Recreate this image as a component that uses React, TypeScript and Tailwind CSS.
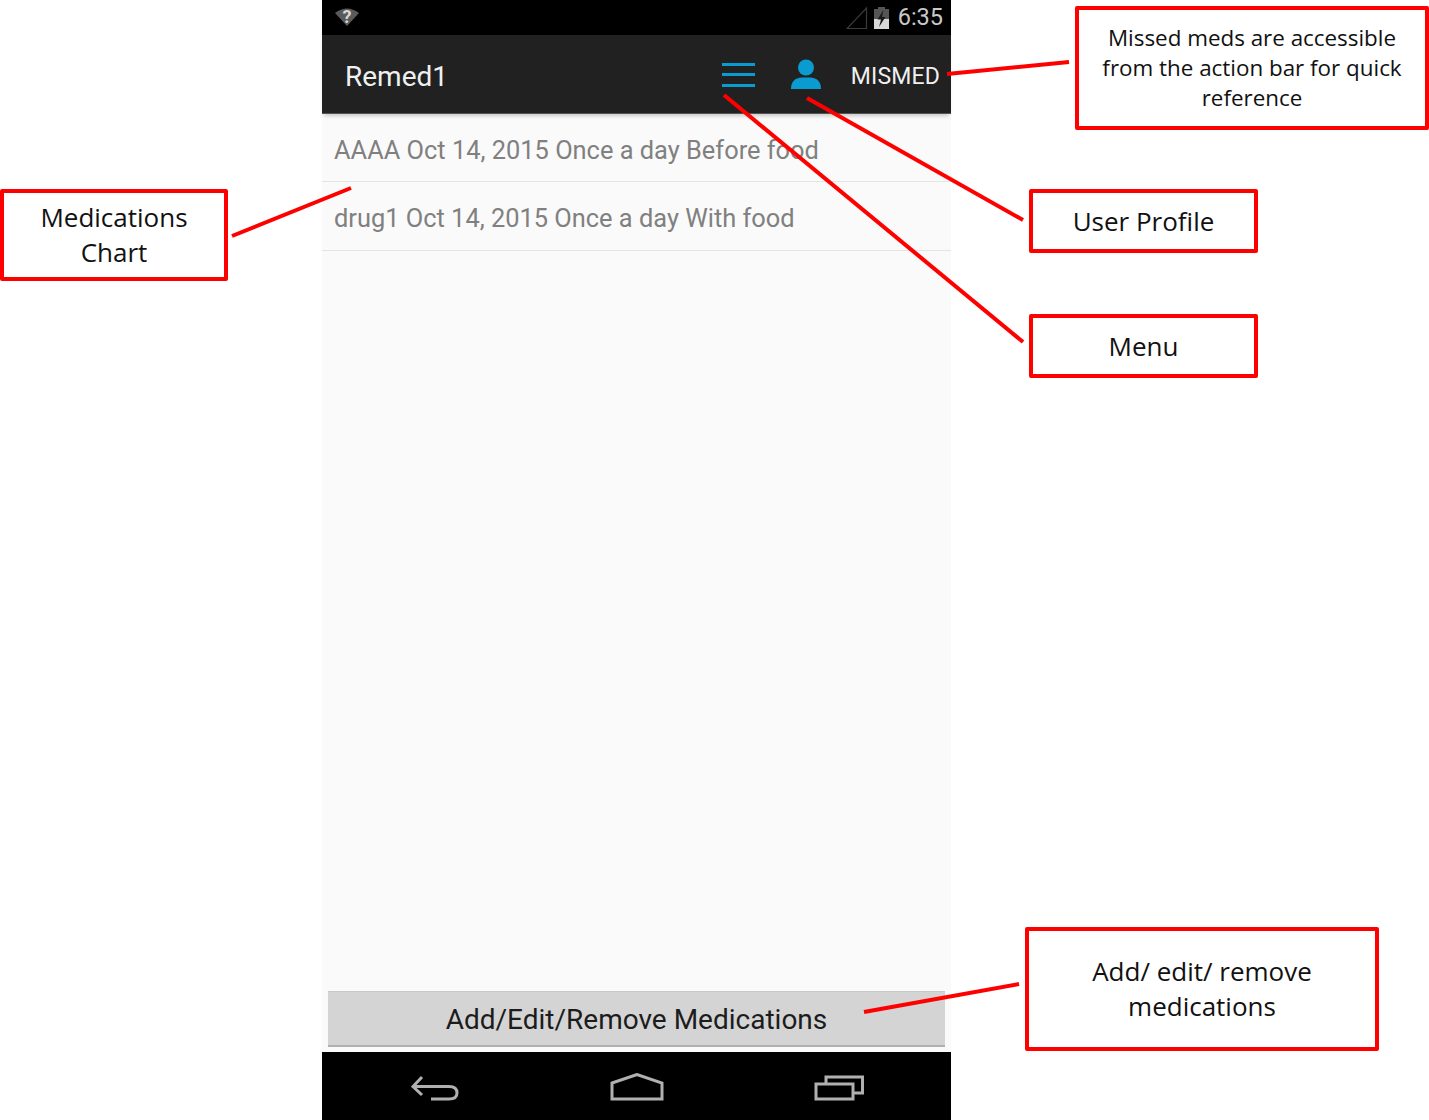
const callouts = [
  { text: ["Missed meds are accessible", "from the action bar for quick", "reference"], box: "left-[1075px] top-[6px] w-[354px] h-[124px] text-[22.4px] leading-[30px]" },
  { text: ["User Profile"], box: "left-[1029px] top-[189px] w-[229px] h-[64px] text-[26px] leading-[35px]" },
  { text: ["Menu"], box: "left-[1029px] top-[314px] w-[229px] h-[64px] text-[26px] leading-[35px]" },
  { text: ["Medications", "Chart"], box: "left-0 top-[189px] w-[228px] h-[92px] text-[26px] leading-[35px]" },
  { text: ["Add/ edit/ remove", "medications"], box: "left-[1025px] top-[927px] w-[354px] h-[124px] text-[26px] leading-[35px]" },
];

const leaders = [
  [947, 74, 1069, 62],
  [807, 98, 1023, 220],
  [724, 95, 1023, 342],
  [232, 236, 351, 188],
  [864, 1012, 1019, 984],
];

const rows = [
  "AAAA Oct 14, 2015 Once a day Before food",
  "drug1 Oct 14, 2015 Once a day With food",
];

function StatusBar() {
  return (
    <div className="h-[35px] bg-black flex items-center pl-[13px] pr-[8px] shrink-0">
      <div className="relative w-[24px] h-[20px] -mt-[1px]">
        <svg width="24" height="20" viewBox="0 0 24 20" className="blur-[0.5px]">
          <path d="M0 6 Q12 -3 24 6 L12 19 Z" fill="#5a5a5a" />
        </svg>
        <span className="absolute inset-0 flex items-center justify-center text-[18px] font-bold leading-none text-[#d8d8d8] font-['Roboto',sans-serif]">?</span>
      </div>
      <div className="ml-auto flex items-center">
        <svg width="22" height="24" viewBox="0 0 22 24">
          <path d="M1 22.5 L20.5 22.5 L20.5 2 Z" fill="none" stroke="#3a3a3a" strokeWidth="1.2" />
        </svg>
        <svg width="15" height="22" viewBox="0 0 15 22" className="ml-[6px]">
          <rect x="4" y="0" width="7" height="3" fill="#555" />
          <rect x="0" y="2" width="15" height="10" fill="#555" />
          <rect x="0" y="12" width="15" height="10" fill="#d8d8d8" />
          <path d="M9.5 3 L3.5 12.5 L7 12.5 L5 20 L11.5 10 L8 10 Z" fill="#1a1a1a" />
        </svg>
        <span className="ml-[9px] text-[23.5px] leading-none text-[#c8c8c8] font-['Roboto',sans-serif]">6:35</span>
      </div>
    </div>
  );
}

function ActionBar() {
  return (
    <div className="h-[79px] bg-[#212121] flex items-center pl-[23px] pr-[11px] shrink-0 shadow-[0_4px_4px_-2px_rgba(0,0,0,0.2)] border-b border-[#555] relative">
      <span className="text-[28px] leading-none text-[#f0f0f0] mt-[5px]">Remed1</span>
      <div className="ml-auto flex items-center">
        <div className="w-[33px] h-[24px] flex flex-col justify-between mt-[1px]">
          <div className="h-[3px] bg-[#0a9bd0]" />
          <div className="h-[3px] bg-[#0a9bd0]" />
          <div className="h-[3px] bg-[#0a9bd0]" />
        </div>
        <svg width="32" height="31" viewBox="0 0 32 31" className="ml-[35px]">
          <circle cx="16" cy="8.5" r="8" fill="#0a9bd0" />
          <path d="M1 30 Q1 19 12 18.5 L20 18.5 Q31 19 31 30 Z" fill="#0a9bd0" />
        </svg>
        <span className="ml-[29px] text-[23px] leading-none text-[#f0f0f0] mt-[4px] tracking-[0.15px]">MISMED</span>
      </div>
    </div>
  );
}

function NavBar() {
  return (
    <div className="h-[68px] bg-black flex items-center shrink-0 pt-[4px] relative">
      <svg width="48" height="26" viewBox="0 0 48 26" fill="none" stroke="#b0b0b0" strokeWidth="3" className="ml-[89px] shrink-0">
        <path d="M11 2 L2 11.5 L11 20" />
        <path d="M2 11.5 H38 Q46 11.5 46 18 Q46 24 38 24 H20" />
      </svg>
      <svg width="54" height="30" viewBox="0 0 54 30" fill="none" stroke="#b0b0b0" strokeWidth="3" className="ml-[151px] shrink-0">
        <path d="M2 10 L27 1.5 L52 10 V26 H2 Z" />
      </svg>
      <svg width="50" height="26" viewBox="0 0 50 26" fill="none" stroke="#b0b0b0" strokeWidth="3" className="ml-[150px] shrink-0">
        <rect x="2" y="9" width="37" height="15" />
        <path d="M12 9 V2 H48.5 V18 H39" />
      </svg>
    </div>
  );
}

export default function App() {
  return (
    <div className="relative w-[1429px] h-[1120px] bg-white overflow-hidden font-['Roboto',sans-serif]">
      <div className="ml-[322px] w-[629px] h-[1120px] flex flex-col bg-[#fafafa]">
        <StatusBar />
        <ActionBar />
        <div className="flex-1 flex flex-col">
          {rows.map((r) => (
            <div key={r} className="h-[69px] first:h-[68px] flex items-center pl-[12px] pt-[6px] border-b border-[#e4e4e4] text-[25.4px] leading-none text-[#808080]">
              {r}
            </div>
          ))}
        </div>
        <div className="px-[6px] pb-[5px]">
          <button className="w-full h-[56px] pt-[2px] bg-[#d4d4d4] border-t border-[#c8c8c8] border-b-2 border-b-[#b0b0b0] text-[28px] leading-none text-[#1c1c1c]">
            Add/Edit/Remove Medications
          </button>
        </div>
        <NavBar />
      </div>

      {/* callout lines */}
      <svg width="1429" height="1120" className="absolute left-0 top-0 pointer-events-none">
        {leaders.map(([x1, y1, x2, y2]) => (
          <line key={x1} x1={x1} y1={y1} x2={x2} y2={y2} stroke="#ff0000" strokeWidth="4" />
        ))}
      </svg>

      {callouts.map((c) => (
        <div key={c.text[0]} className={`absolute ${c.box} border-4 border-[#ff0000] rounded-[2px] bg-white flex flex-col items-center justify-center text-[#111] font-['Open_Sans',sans-serif]`}>
          {c.text.map((t) => (
            <span key={t}>{t}</span>
          ))}
        </div>
      ))}
    </div>
  );
}
